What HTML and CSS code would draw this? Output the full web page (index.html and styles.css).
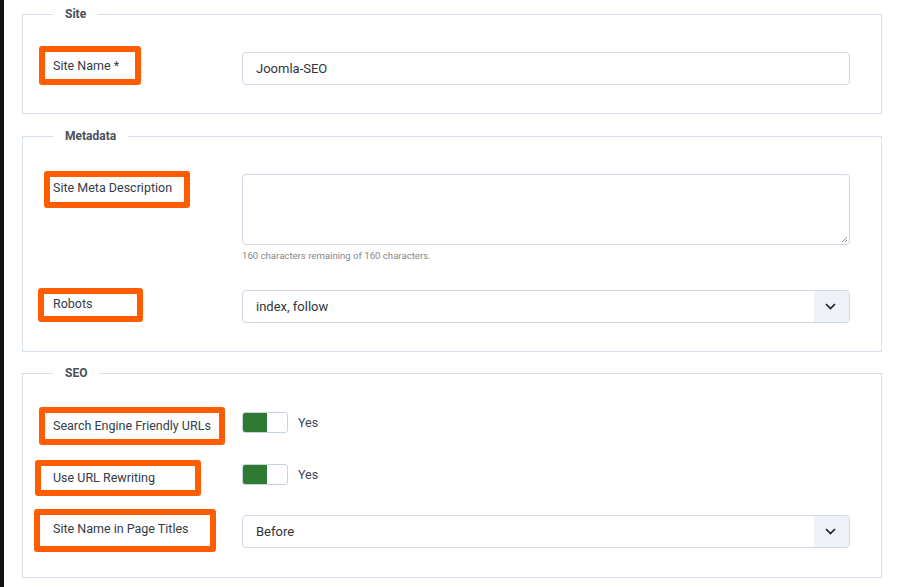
FILE: index.html
```html
<!DOCTYPE html>
<html lang="en">
<head>
<meta charset="utf-8">
<title>Site settings</title>
<link rel="stylesheet" href="styles.css">
</head>
<body>
<div class="page">
  <div class="bar"></div>
  <main class="content">
    <section class="fs fs-site">
      <div class="legend">Site</div>
      <div class="row">
        <div class="label"><span class="mark mark-1"></span>Site Name *</div>
        <div class="control"><div class="input">Joomla-SEO</div></div>
      </div>
    </section>

    <section class="fs fs-meta">
      <div class="legend">Metadata</div>
      <div class="row">
        <div class="label"><span class="mark mark-2"></span>Site Meta Description</div>
        <div class="control">
          <div class="textarea"><svg class="grip" width="7" height="7" viewBox="0 0 7 7"><path d="M6 1L1 6M6 4L4 6" stroke="#999" stroke-width="1"/></svg></div>
          <div class="help">160 characters remaining of 160 characters.</div>
        </div>
      </div>
      <div class="row row-gap-28">
        <div class="label"><span class="mark mark-3"></span>Robots</div>
        <div class="control">
          <div class="select"><span class="value">index, follow</span><span class="caret"><svg width="11" height="7" viewBox="0 0 11 7"><path d="M1 1l4.5 4.5L10 1" fill="none" stroke="#1e2228" stroke-width="1.7"/></svg></span></div>
        </div>
      </div>
    </section>

    <section class="fs fs-seo">
      <div class="legend">SEO</div>
      <div class="row">
        <div class="label label-toggle"><span class="mark mark-4"></span>Search Engine Friendly URLs</div>
        <div class="control"><div class="switch-line"><span class="switch"><span class="on"></span></span><span class="yes">Yes</span></div></div>
      </div>
      <div class="row row-gap-30">
        <div class="label label-toggle"><span class="mark mark-5"></span>Use URL Rewriting</div>
        <div class="control"><div class="switch-line"><span class="switch"><span class="on"></span></span><span class="yes">Yes</span></div></div>
      </div>
      <div class="row row-gap-29">
        <div class="label"><span class="mark mark-6"></span>Site Name in Page Titles</div>
        <div class="control">
          <div class="select"><span class="value">Before</span><span class="caret"><svg width="11" height="7" viewBox="0 0 11 7"><path d="M1 1l4.5 4.5L10 1" fill="none" stroke="#1e2228" stroke-width="1.7"/></svg></span></div>
        </div>
      </div>
    </section>
  </main>
</div>
</body>
</html>
```

FILE: styles.css
```css
* { box-sizing: border-box; }
html, body { margin: 0; padding: 0; background: #fff; }
body {
  font-family: Roboto, "Liberation Sans", Arial, sans-serif;
  color: #22262a;
}
.page {
  display: flex;
  min-height: 587px;
}
.bar {
  width: 4px;
  flex: none;
  background: #121212;
}
.content {
  padding: 14px 0 0 18px;
}
.fs {
  position: relative;
  width: 860px;
  border: 1px solid #d6dfea;
  padding: 37px 31px 28px 0;
  margin-bottom: 22px;
}
.fs-meta { margin-bottom: 21px; }
.fs-seo { padding-top: 38px; padding-bottom: 29px; margin-bottom: 0; }
.legend {
  position: absolute;
  top: -9px;
  left: 30px;
  padding: 0 12px;
  background: #fff;
  font-size: 12px;
  line-height: 16px;
  font-weight: 700;
  color: #4a5058;
}
.row {
  display: grid;
  grid-template-columns: 219px 608px;
  align-items: start;
}
.row-gap-28 { margin-top: 28px; }
.row-gap-30 { margin-top: 30px; }
.row-gap-29 { margin-top: 29px; }
.label {
  position: relative;
  padding: 6px 0 0 30px;
  font-size: 12.5px;
  line-height: 16px;
  color: #333c48;
}
.label-toggle { padding-top: 6px; }
.mark {
  position: absolute;
  border: 6px solid #ff5d00;
  border-radius: 3px;
}
.mark-1 { left: 16px; top: -6px; width: 102px; height: 39px; }
.mark-2 { left: 21px; top: -3px; width: 146px; height: 37px; }
.mark-3 { left: 15px; top: -2px; width: 105px; height: 34px; }
.mark-4 { left: 16px; top: -5px; width: 186px; height: 38px; }
.mark-5 { left: 12px; top: -4px; width: 166px; height: 36px; }
.mark-6 { left: 11px; top: -6px; width: 182px; height: 43px; }

.input, .select {
  height: 33px;
  border: 1px solid #cfd8e4;
  border-radius: 4px;
  font-size: 13px;
  line-height: 31px;
  padding-left: 13px;
  color: #30353b;
  background: #fff;
}
.textarea {
  position: relative;
  height: 71px;
  border: 1px solid #cfd8e4;
  border-radius: 4px;
  background: #fff;
}
.grip {
  position: absolute;
  right: 1px;
  bottom: 1px;
}
.help {
  margin-top: 4px;
  font-size: 9.6px;
  line-height: 13px;
  color: #85878a;
}
.select {
  display: flex;
  justify-content: space-between;
  padding-right: 0;
  overflow: hidden;
}
.caret {
  width: 35px;
  height: 31px;
  background: #eef2f8;
  display: flex;
  align-items: center;
  justify-content: center;
  padding-right: 2px;
}
.switch-line {
  display: flex;
  align-items: center;
  height: 21px;
}
.switch {
  display: flex;
  width: 46px;
  height: 21px;
  border: 1px solid #c9d4e1;
  border-radius: 3px;
  overflow: hidden;
  background: #fff;
}
.on {
  width: 24px;
  height: 100%;
  background: #2e7a32;
}
.yes {
  margin-left: 10px;
  font-size: 12.5px;
  line-height: 16px;
  color: #3d4653;
}
```
